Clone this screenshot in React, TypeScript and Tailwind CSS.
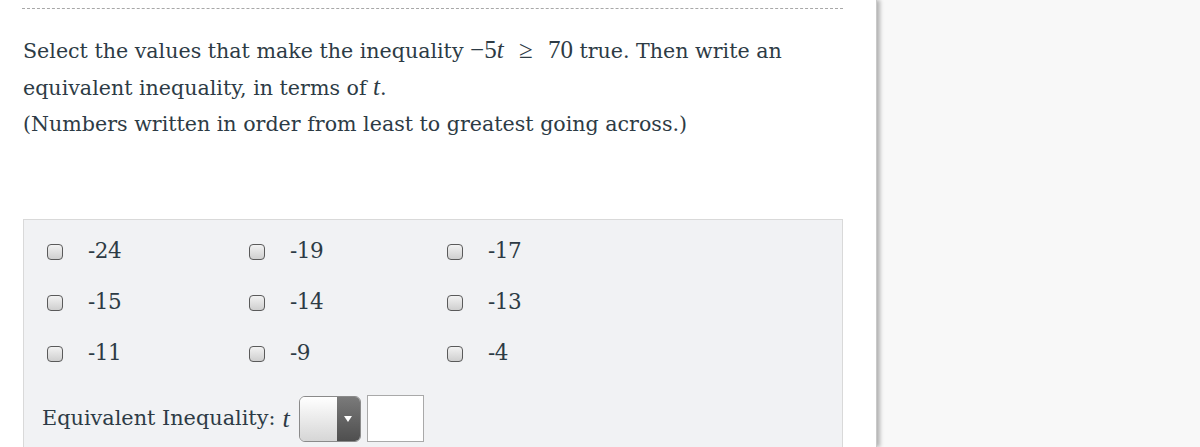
const options = ["-24", "-19", "-17", "-15", "-14", "-13", "-11", "-9", "-4"];

const Checkbox = () => (
  <span className="inline-block w-[16px] h-[16px] rounded-[4px] border-[1.5px] border-[#5a5a5a] bg-gradient-to-b from-[#f2f2f2] to-[#cfcfcf] shrink-0" />
);

export default function App() {
  return (
    <div className="w-[1200px] h-[447px] flex bg-[#f8f8f8] overflow-hidden font-['DejaVu_Serif',serif] text-[#2d3b45]">
      <div className="w-[877px] h-full bg-white shadow-[3px_0_4px_rgba(0,0,0,0.28)] border-r border-[#c9c9c9] shrink-0">
        <div className="ml-[22px] w-[821px] mt-[8px] border-t border-dashed border-[#a8a8a8]" />
        <div className="pl-[23px] mt-[23px] text-[20.6px] leading-[36px]">
          <p>
            Select the values that make the inequality{" "}
            <span className="font-['Liberation_Serif',serif] text-[25px]">
              −5<i>t</i> <span className="mx-[9px]">≥</span> 70
            </span>{" "}
            true. Then write an
          </p>
          <p>
            equivalent inequality, in terms of{" "}
            <i className="font-['Liberation_Serif',serif] text-[25px]">t</i>.
          </p>
          <p>(Numbers written in order from least to greatest going across.)</p>
        </div>
        <div className="ml-[23px] mt-[77px] w-[820px] h-[260px] bg-[#f1f2f4] border border-[#d9d9d9] pt-[6px]">
          <div className="grid grid-cols-[202px_198px_200px] pl-[23px]">
            {options.map((o) => (
              <div key={o} className="flex items-center h-[51px] gap-[25px]">
                <Checkbox />
                <span className="text-[21.5px] tracking-[-0.5px]">{o}</span>
              </div>
            ))}
          </div>
          <div className="flex items-center mt-[16px] pl-[18px]">
            <span className="text-[20.8px]">Equivalent Inequality:</span>
            <i className="font-['Liberation_Serif',serif] text-[26px] ml-[7px] mr-[9px]">t</i>
            <div className="flex w-[62px] h-[46px] rounded-[6px] border border-[#8a8a8a] overflow-hidden">
              <div className="flex-1 bg-gradient-to-b from-[#ffffff] to-[#d6d6d6]" />
              <div className="w-[23px] bg-gradient-to-b from-[#7a7a7a] to-[#4f4f4f] flex items-center justify-center">
                <svg width="8" height="6" viewBox="0 0 8 6">
                  <path d="M0 0 L8 0 L4 6 Z" fill="#fff" />
                </svg>
              </div>
            </div>
            <div className="ml-[6px] w-[57px] h-[47px] bg-white border border-[#a9a9a9]" />
          </div>
        </div>
      </div>
    </div>
  );
}
